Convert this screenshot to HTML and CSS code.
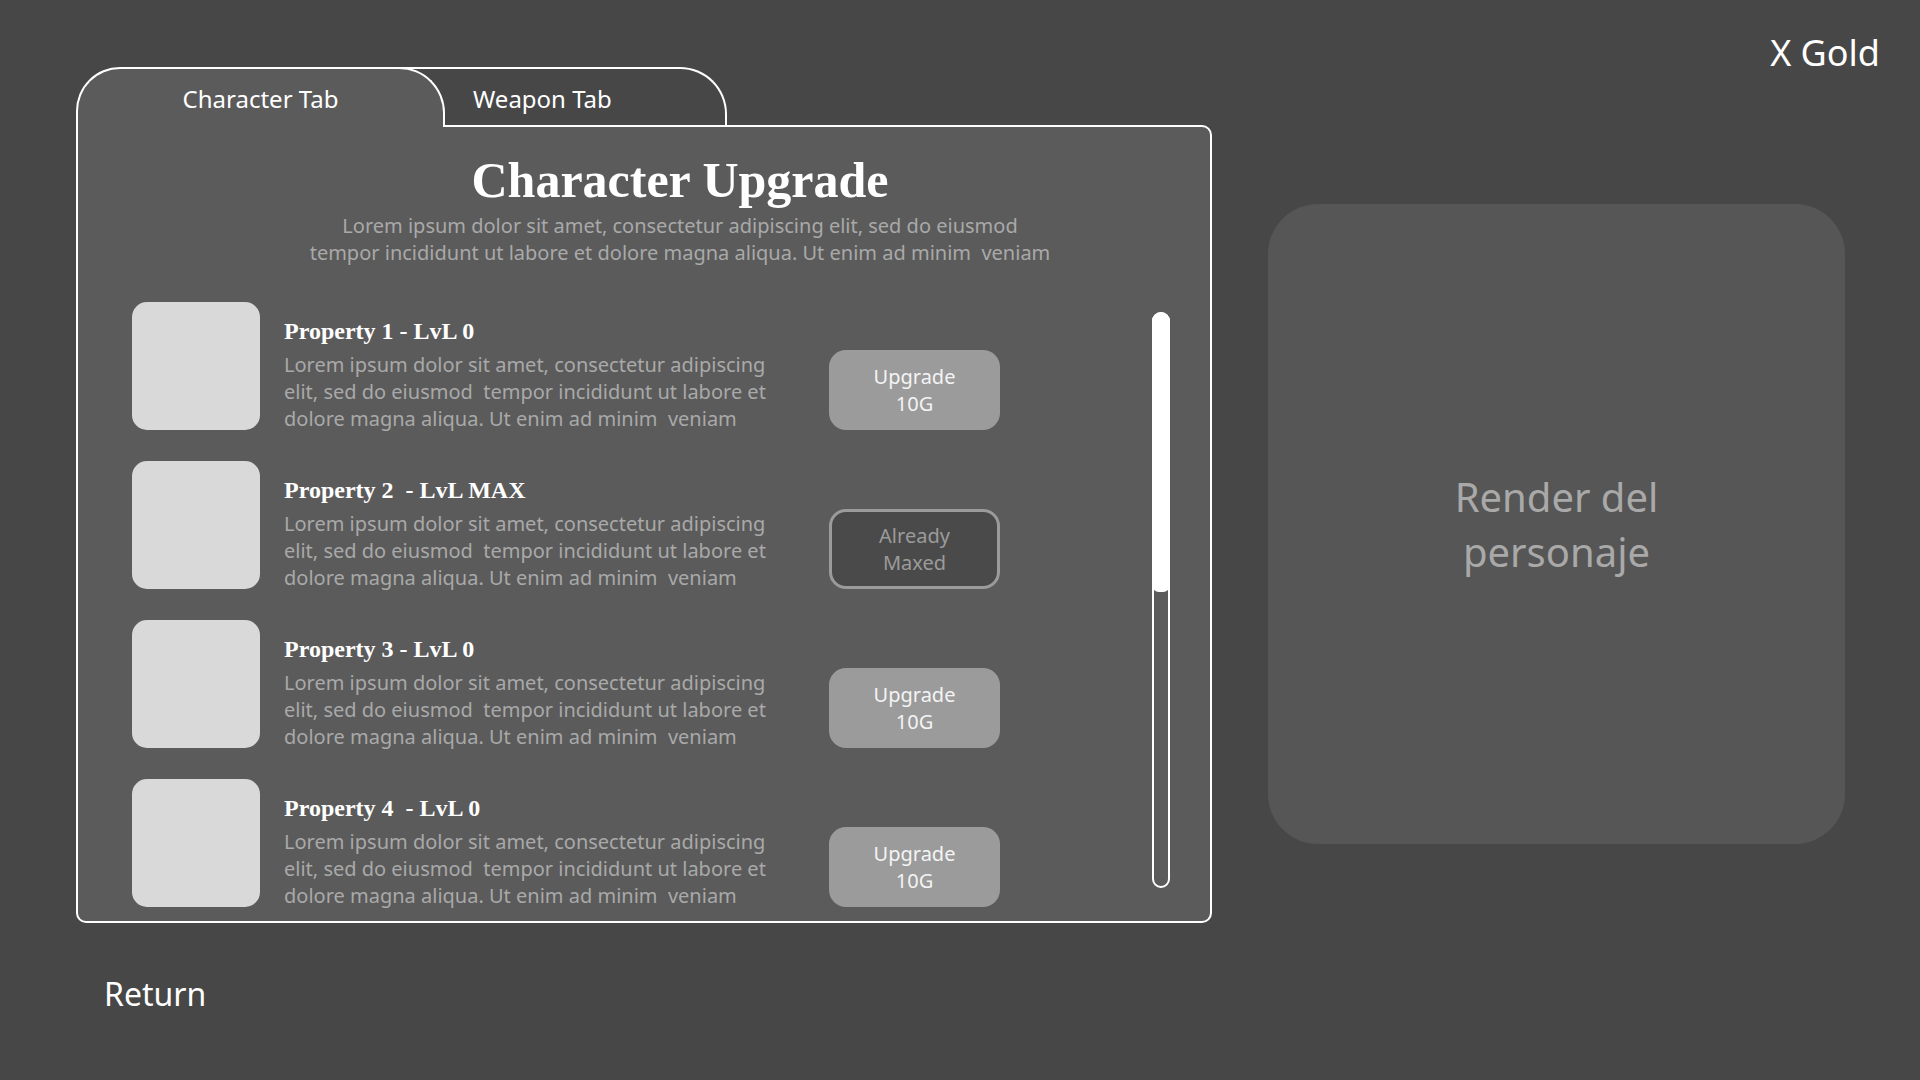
FILE: index.html
```html
<!DOCTYPE html>
<html lang="en">
    <head>
        <meta charset="UTF-8" />
        <meta name="viewport" content="width=device-width, initial-scale=1.0" />
        <title>Character Upgrade</title>
        <link rel="stylesheet" href="styles.css">
    </head>
    <body>
        <div class="screen">
            <div class="main-col">
                <div class="tabs">
                    <div class="tab tab-active">Character Tab</div>
                    <div class="tab tab-other">Weapon Tab</div>
                </div>

                <div class="panel">
                    <div class="panel-head">
                        <h1 class="title">Character Upgrade</h1>
                        <p class="subtitle">Lorem ipsum dolor sit amet, consectetur adipiscing elit, sed do eiusmod<br>tempor incididunt ut labore et dolore magna aliqua. Ut enim ad minim&nbsp; veniam</p>
                    </div>

                    <div class="panel-body">
                        <div class="list">
                            <div class="row">
                                <div class="thumb"></div>
                                <div class="info">
                                    <h3 class="prop-name">Property 1 - LvL 0</h3>
                                    <p class="prop-desc">Lorem ipsum dolor sit amet, consectetur adipiscing<br>elit, sed do eiusmod&nbsp; tempor incididunt ut labore et<br>dolore magna aliqua. Ut enim ad minim&nbsp; veniam</p>
                                </div>
                                <button class="btn">Upgrade<br>10G</button>
                            </div>
                            <div class="row">
                                <div class="thumb"></div>
                                <div class="info">
                                    <h3 class="prop-name">Property 2&nbsp; - LvL MAX</h3>
                                    <p class="prop-desc">Lorem ipsum dolor sit amet, consectetur adipiscing<br>elit, sed do eiusmod&nbsp; tempor incididunt ut labore et<br>dolore magna aliqua. Ut enim ad minim&nbsp; veniam</p>
                                </div>
                                <button class="btn btn-maxed">Already<br>Maxed</button>
                            </div>
                            <div class="row">
                                <div class="thumb"></div>
                                <div class="info">
                                    <h3 class="prop-name">Property 3 - LvL 0</h3>
                                    <p class="prop-desc">Lorem ipsum dolor sit amet, consectetur adipiscing<br>elit, sed do eiusmod&nbsp; tempor incididunt ut labore et<br>dolore magna aliqua. Ut enim ad minim&nbsp; veniam</p>
                                </div>
                                <button class="btn">Upgrade<br>10G</button>
                            </div>
                            <div class="row">
                                <div class="thumb"></div>
                                <div class="info">
                                    <h3 class="prop-name">Property 4&nbsp; - LvL 0</h3>
                                    <p class="prop-desc">Lorem ipsum dolor sit amet, consectetur adipiscing<br>elit, sed do eiusmod&nbsp; tempor incididunt ut labore et<br>dolore magna aliqua. Ut enim ad minim&nbsp; veniam</p>
                                </div>
                                <button class="btn">Upgrade<br>10G</button>
                            </div>
                        </div>

                        <div class="scrollbar">
                            <div class="scroll-thumb"></div>
                        </div>
                    </div>
                </div>

                <div class="return">Return</div>
            </div>

            <div class="side-col">
                <div class="gold">X Gold</div>
                <div class="render">Render del<br>personaje</div>
            </div>
        </div>
    </body>
</html>
```

FILE: styles.css
```css
body {
    margin: 0;
    background: #474747;
    color: #ffffff;
    font-family: "Noto Sans", "Open Sans", sans-serif;
}

.screen {
    display: grid;
    grid-template-columns: 1136px 1fr;
    column-gap: 56px;
    height: 1080px;
    padding: 0 40px 0 76px;
    box-sizing: border-box;
}

/* left side: tabs + panel */
.main-col {
    padding-top: 67px;
}

.tabs {
    display: flex;
    align-items: flex-start;
    height: 58px;
}

.tab {
    box-sizing: border-box;
    border: 2px solid #ffffff;
    border-bottom: none;
    font-size: 24px;
    line-height: 30px;
    padding-top: 15px;
}

.tab-active {
    position: relative;
    z-index: 2;
    width: 369px;
    height: 60px;
    border-radius: 44px 46px 0 0;
    background: #5b5b5b;
    text-align: center;
}

.tab-other {
    position: relative;
    z-index: 1;
    width: 332px;
    height: 58px;
    margin-left: -50px;
    padding-left: 78px;
    border-left: none;
    border-top-right-radius: 47px;
    background: #474747;
}

.panel {
    height: 798px;
    box-sizing: border-box;
    border: 2px solid #ffffff;
    border-radius: 0 10px 10px 10px;
    background: #5b5b5b;
    overflow: hidden;
}

.panel-head {
    padding-top: 27px;
    padding-left: 72px;
    text-align: center;
}

.title {
    margin: 0 0 6px;
    font-family: "Liberation Serif", serif;
    font-weight: bold;
    font-size: 50px;
    line-height: 52px;
}

.subtitle {
    margin: 0;
    color: #a9a9a9;
    font-size: 20px;
    line-height: 27px;
}

.panel-body {
    display: flex;
    margin-top: 36px;
    padding-left: 54px;
}

.list {
    display: flex;
    flex-direction: column;
    gap: 31px;
}

.row {
    display: flex;
    height: 128px;
}

.thumb {
    width: 128px;
    height: 128px;
    border-radius: 15px;
    background: #d9d9d9;
}

.info {
    width: 490px;
    margin-left: 24px;
    padding-top: 14px;
}

.prop-name {
    margin: 0 0 5px;
    font-family: "Liberation Serif", serif;
    font-weight: bold;
    font-size: 24px;
    line-height: 30px;
}

.prop-desc {
    margin: 0;
    color: #a9a9a9;
    font-size: 20px;
    line-height: 27px;
    white-space: nowrap;
}

.btn {
    align-self: flex-end;
    width: 171px;
    height: 80px;
    margin-left: 55px;
    border: none;
    border-radius: 17px;
    background: #9b9b9b;
    color: #f4f4f4;
    font-family: "Noto Sans", sans-serif;
    font-size: 20px;
    line-height: 27px;
}

.btn-maxed {
    border: 3px solid #9b9b9b;
    background: #4a4a4a;
    color: #9b9b9b;
}

.scrollbar {
    width: 18px;
    height: 576px;
    box-sizing: border-box;
    margin: 10px 40px 0 auto;
    border: 2px solid #ffffff;
    border-radius: 9px;
}

.scroll-thumb {
    height: 280px;
    margin: -2px -2px 0;
    border-radius: 9px 9px 7px 7px;
    background: #ffffff;
}

.return {
    margin: 49px 0 0 28px;
    font-size: 32px;
    line-height: 44px;
}

/* right side */
.side-col {
    display: flex;
    flex-direction: column;
    align-items: flex-end;
    padding-top: 29px;
}

.gold {
    font-size: 36px;
    line-height: 48px;
}

.render {
    align-self: flex-start;
    display: flex;
    align-items: center;
    justify-content: center;
    width: 577px;
    height: 640px;
    margin-top: 127px;
    border-radius: 50px;
    background: #565656;
    color: #a9a9a9;
    font-size: 40px;
    line-height: 55px;
    text-align: center;
}
```
